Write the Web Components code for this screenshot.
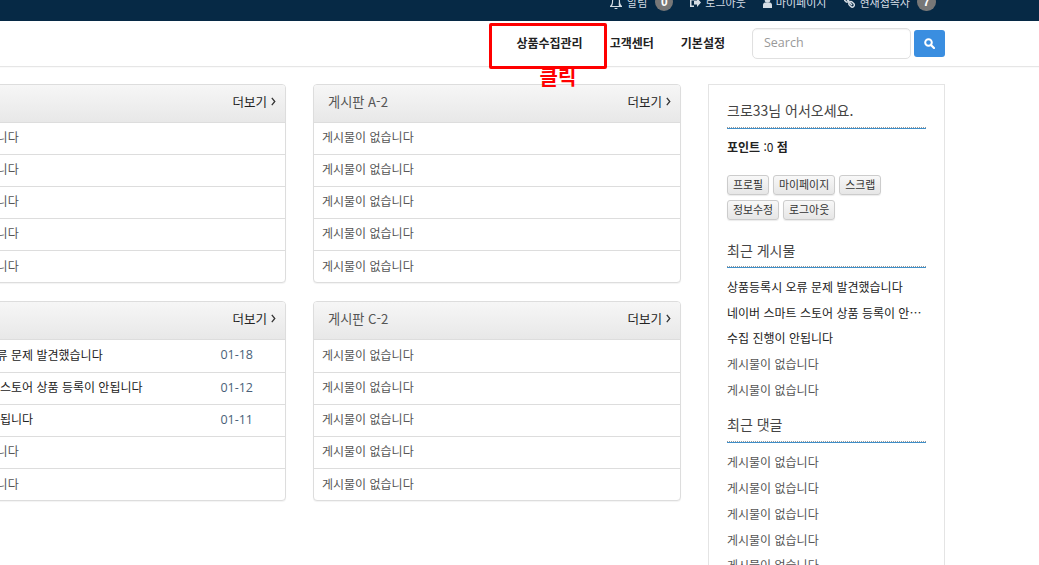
<!DOCTYPE html>
<html lang="ko">
<head>
<meta charset="utf-8">
<title>게시판</title>
<style>
html,body{margin:0;padding:0;background:#fff;overflow:hidden;}
body{font-family:"Noto Sans CJK KR","Noto Sans",sans-serif;font-size:12px;color:#333;}
</style>
</head>
<body>
<app-shell>
  <top-bar></top-bar>
  <nav-bar></nav-bar>
  <page-main>
    <board-panel more>
      <board-row dim>게시물이 없습니다</board-row>
      <board-row dim>게시물이 없습니다</board-row>
      <board-row dim>게시물이 없습니다</board-row>
      <board-row dim>게시물이 없습니다</board-row>
      <board-row dim>게시물이 없습니다</board-row>
    </board-panel>
    <board-panel heading="게시판 A-2" more>
      <board-row dim>게시물이 없습니다</board-row>
      <board-row dim>게시물이 없습니다</board-row>
      <board-row dim>게시물이 없습니다</board-row>
      <board-row dim>게시물이 없습니다</board-row>
      <board-row dim>게시물이 없습니다</board-row>
    </board-panel>
    <board-panel tall more>
      <board-row date="01-18">상품등록시 오류 문제 발견했습니다</board-row>
      <board-row date="01-12">네이버 스마트 스토어 상품 등록이 안됩니다</board-row>
      <board-row date="01-11">수집 진행이 안됩니다</board-row>
      <board-row dim>게시물이 없습니다</board-row>
      <board-row dim>게시물이 없습니다</board-row>
    </board-panel>
    <board-panel tall heading="게시판 C-2" more>
      <board-row dim>게시물이 없습니다</board-row>
      <board-row dim>게시물이 없습니다</board-row>
      <board-row dim>게시물이 없습니다</board-row>
      <board-row dim>게시물이 없습니다</board-row>
      <board-row dim>게시물이 없습니다</board-row>
    </board-panel>
    <side-box slot="side"></side-box>
  </page-main>
  <click-note></click-note>
</app-shell>
<script>
function def(name, html, init){
  const t=document.createElement('template'); t.innerHTML=html;
  customElements.define(name, class extends HTMLElement{
    constructor(){super();this.attachShadow({mode:'open'}).appendChild(t.content.cloneNode(true));}
    connectedCallback(){ if(init) init(this, this.shadowRoot); }
  });
}
def('app-shell',`<style>:host{display:block;position:relative;width:1039px;height:565px;overflow:hidden;}</style><slot></slot>`);

def('top-bar',`<style>
:host{display:block;height:21px;background:#062945;overflow:hidden;color:#d5dde4;font-size:11px;}
.in{display:flex;justify-content:flex-end;align-items:center;height:24px;margin-top:-10px;padding-right:103px;}
.i{display:flex;align-items:center;}
.i svg{display:block;margin-right:4px;fill:#d5dde4;}
.b{background:#777;color:#fff;border-radius:10px;font:bold 12px/18px "Liberation Sans",sans-serif;width:18px;height:18px;text-align:center;margin-left:8px;}
.i+.i{margin-left:17px;}
</style><div class="in">
<span class="i"><svg width="12" height="13" viewBox="0 0 12 13" style="margin-right:5px"><path d="M6 0a1 1 0 0 1 1 1c2 .4 3 2 3 4 0 3 1 4 2 5v1H0v-1c1-1 2-2 2-5 0-2 1-3.600 3-4a1 1 0 0 1 1-1zM3 10h6C8.300 9 8.900 7 8.900 5c0-1.800-1.200-3-2.900-3S3.100 3.200 3.100 5c0 2-.4 4-1 5zM4.500 12h3a1.500 1.500 0 0 1-3 0z" fill-rule="evenodd"/></svg>알림<span class="b">0</span></span>
<span class="i"><svg width="11" height="11" viewBox="0 0 11 11"><path d="M0 2h4v1.500H1.500v5H4V10H0zM4 3.500h3V1l4 4.500L7 10V7.500H4z"/></svg>로그아웃</span>
<span class="i"><svg width="9" height="11" viewBox="0 0 9 11"><circle cx="4.500" cy="3" r="2.800"/><path d="M0 11V8c0-1.500 1-2.500 2-2.500h5c1 0 2 1 2 2.500v3z"/></svg>마이페이지</span>
<span class="i" style="margin-left:18px"><svg width="11" height="11" viewBox="0 0 11 11"><path d="M4.600 1.500 L3.400.300A2 2 0 0 0 .5 3.200L1.800 4.500A2 2 0 0 0 4.700 4.600ZM9.700 6.600L8.400 5.300A2 2 0 0 0 5.500 8.200L6.800 9.500A2 2 0 0 0 9.700 6.600Z" fill="none" stroke="#d5dde4" stroke-width="1.400"/><path d="M3 3l5 5" stroke="#d5dde4" stroke-width="1.400"/></svg>현재접속자<span class="b" style="width:19px;margin-left:7px">7</span></span>
</div>`);

def('nav-bar',`<style>
:host{display:block;height:45px;background:#fff;border-bottom:1px solid #e6e6e6;box-shadow:0 1px 1px rgba(0,0,0,.02);}
.in{display:flex;justify-content:flex-end;align-items:center;height:45px;padding-right:94px;font-size:12px;font-weight:700;color:#222;}
a{display:block;white-space:nowrap;margin-top:-2px;}
a+a{margin-left:27px;}
.s{margin-left:27px;display:flex;align-items:center;}
.f{box-sizing:border-box;width:159px;height:31px;border:1px solid #e0e0e0;border-radius:5px;padding:0 11px;font:400 12.500px/27px "Open Sans","Noto Sans",sans-serif;color:#999;box-shadow:inset 0 1px 1px rgba(0,0,0,.05);}
.g{box-sizing:border-box;width:31px;height:27px;margin-left:3px;background:#3a8ee0;border-radius:3px;display:flex;align-items:center;justify-content:center;}
</style><div class="in"><a>상품수집관리</a><a>고객센터</a><a>기본설정</a>
<div class="s"><div class="f">Search</div><div class="g"><svg width="11" height="11" viewBox="0 0 11 11"><circle cx="4.500" cy="4.500" r="3.300" fill="none" stroke="#fff" stroke-width="2"/><path d="M7 7l3 3" stroke="#fff" stroke-width="2.200" stroke-linecap="round"/></svg></div></div></div>`);

def('page-main',`<style>
:host{display:flex;align-items:flex-start;margin:17px 0 0 -82px;width:1027px;}
.b{display:grid;grid-template-columns:368px 368px;column-gap:27px;row-gap:18px;flex:none;}
.s{margin-left:27px;flex:none;}
</style><div class="b"><slot></slot></div><div class="s"><slot name="side"></slot></div>`);

def('board-panel',`<style>
:host{display:block;box-sizing:border-box;width:368px;height:199px;background:#fff;border:1px solid #ddd;border-radius:4px;box-shadow:0 1px 1px rgba(0,0,0,.05);overflow:hidden;}
:host([tall]){height:200px;}
:host([tall]) ::slotted(board-row:first-child){height:33px;padding-bottom:4px;}
.h{box-sizing:border-box;height:38px;border-bottom:1px solid #ddd;background:linear-gradient(#f6f6f6,#e8e8e8);display:flex;justify-content:space-between;align-items:center;padding:0 9px 0 14px;}
.t{font-size:13.200px;color:#555;margin-top:-5px;}
.m{font-size:12.500px;color:#222;display:flex;align-items:center;margin-top:-5px;}
.m svg{margin-left:4px;margin-top:1px;}
</style><div class="h"><span class="t"></span><span class="m">더보기<svg width="5" height="9" viewBox="0 0 5 9"><path d="M.8.800l3 3.700-3 3.700" fill="none" stroke="#333" stroke-width="1.300"/></svg></span></div><slot></slot>`,
(el,r)=>{r.querySelector('.t').textContent=el.getAttribute('heading')||'';});

def('board-row',`<style>
:host{display:flex;box-sizing:border-box;height:32px;border-bottom:1px solid #ddd;padding:0 32px 4px 8px;align-items:center;justify-content:space-between;color:#222;font-size:12px;white-space:nowrap;}
:host(:last-child){border-bottom:0;height:31px;padding-bottom:3px;}
:host([dim]){color:#555;}
.d{color:#4a5f78;font:12.500px "Open Sans",sans-serif;margin-top:1px;}
</style><span><slot></slot></span><span class="d"></span>`,
(el,r)=>{r.querySelector('.d').textContent=el.getAttribute('date')||'';});

def('side-title',`<style>
:host{display:block;font-size:14px;line-height:20px;color:#444;padding-bottom:7px;border-bottom:1px dotted #999;box-shadow:0 1px 0 #3f8fc9;}
</style><slot></slot>`);
def('side-btn',`<style>
:host{display:inline-block;box-sizing:border-box;height:20px;padding:0 5px;line-height:17px;font-size:10.900px;color:#333;background:linear-gradient(#f8f8f8,#e6e6e6);border:1px solid #ccc;border-radius:3px;box-shadow:0 1px 1px rgba(0,0,0,.08);white-space:nowrap;}
</style><slot></slot>`);
def('side-link',`<style>
:host{display:block;height:25.700px;line-height:25.700px;font-size:12px;color:#222;white-space:nowrap;overflow:hidden;text-overflow:ellipsis;}
:host([dim]){color:#555;}
</style><slot></slot>`);

def('side-box',`<style>
:host{display:block;box-sizing:border-box;width:237px;height:520px;border:1px solid #e4e4e4;background:#fff;padding:15px 18px 0;}
.p{font-size:12px;font-weight:700;color:#222;margin-top:9px;line-height:20px;}
.p span{font-weight:400;}
.bs{display:flex;flex-wrap:wrap;gap:5px 4px;margin-top:18px;}
.g{margin-top:20px;margin-bottom:7px;padding-bottom:6px;}
.g2{margin-top:12px;}
.l{margin-top:7px;}
</style>
<side-title>크로33님 어서오세요.</side-title>
<div class="p">포인트 <span>:0</span> 점</div>
<div class="bs"><side-btn>프로필</side-btn><side-btn>마이페이지</side-btn><side-btn>스크랩</side-btn><side-btn>정보수정</side-btn><side-btn>로그아웃</side-btn></div>
<side-title class="g">최근 게시물</side-title>
<side-link>상품등록시 오류 문제 발견했습니다</side-link>
<side-link>네이버 스마트 스토어 상품 등록이 안됩니다</side-link>
<side-link>수집 진행이 안됩니다</side-link>
<side-link dim>게시물이 없습니다</side-link>
<side-link dim>게시물이 없습니다</side-link>
<side-title class="g2">최근 댓글</side-title>
<div class="l"><side-link dim>게시물이 없습니다</side-link>
<side-link dim>게시물이 없습니다</side-link>
<side-link dim>게시물이 없습니다</side-link>
<side-link dim>게시물이 없습니다</side-link>
<side-link dim>게시물이 없습니다</side-link></div>`);

def('click-note',`<style>
:host{position:absolute;left:489px;top:23px;width:118px;height:46px;box-sizing:border-box;border:3px solid #f00;border-radius:2px;}
.t{position:absolute;left:0;width:132px;top:39px;text-align:center;color:#f00;font-size:20px;font-weight:700;line-height:24px;}
</style><div class="t">클릭</div>`);
</script>
</body>
</html>
